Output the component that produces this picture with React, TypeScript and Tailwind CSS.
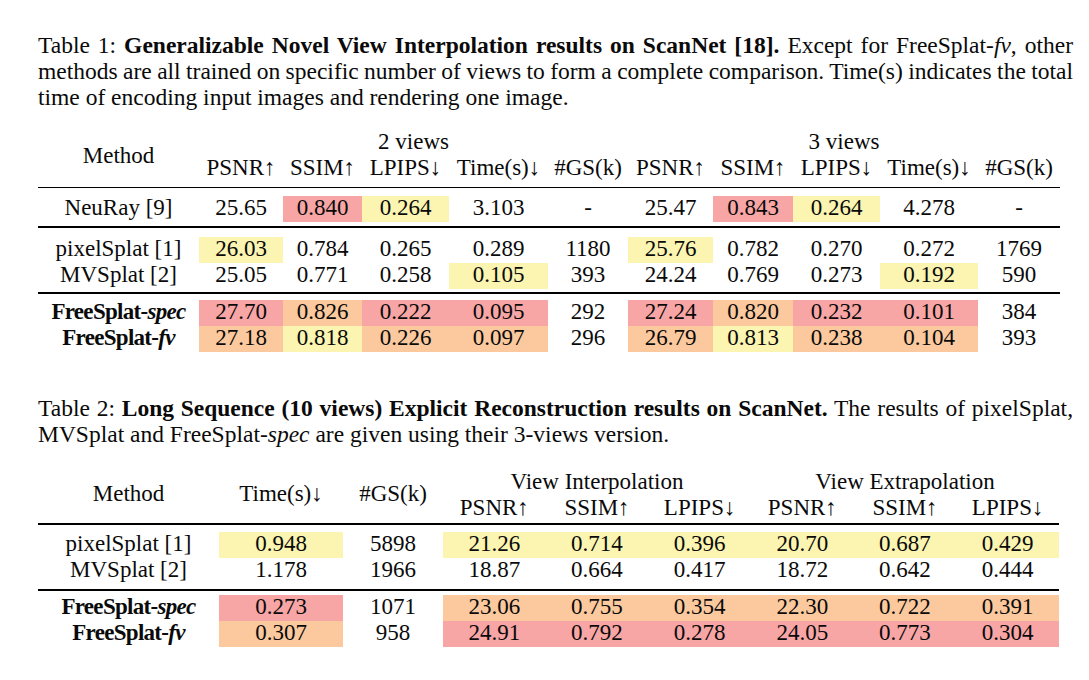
import React from "react";

const Y = "bg-[#FBF5B1]";
const R = "bg-[#F8A6A5]";
const O = "bg-[#FBC99D]";

type C = [string, string?];

const T1 = "grid grid-cols-[161px_84px_79px_87px_99px_80px_85px_80px_87px_98px_82px]";
const T2 = "grid grid-cols-[181px_124px_100px_102.67px_102.67px_102.67px_102.67px_102.67px_102.67px]";

function Cell({ v, bg }: { v: React.ReactNode; bg?: string }) {
  return <div className={`h-[26px] leading-[23px] text-center whitespace-nowrap ${bg ?? ""}`}>{v}</div>;
}

function Row({ grid, name, cells }: { grid: string; name: React.ReactNode; cells: C[] }) {
  return (
    <div className={grid}>
      <Cell v={name} />
      {cells.map((c, i) => (
        <Cell key={i} v={c[0]} bg={c[1]} />
      ))}
    </div>
  );
}

function Rule({ className }: { className: string }) {
  return <div className={`h-[1.5px] bg-black ${className}`} />;
}

const Spec = (
  <span className="font-bold tracking-[-0.7px]">
    FreeSplat-<i>spec</i>
  </span>
);
const Fv = (
  <span className="font-bold tracking-[-0.7px]">
    FreeSplat-<i>fv</i>
  </span>
);

function JLine({ children }: { children: React.ReactNode }) {
  return (
    <div className="text-justify [text-align-last:justify] [word-spacing:-1.2px] whitespace-nowrap">{children}</div>
  );
}

export default function App() {
  return (
    <div className="w-[1089px] h-[680px] bg-white text-[#0a0a0a] font-['Liberation_Serif','Times_New_Roman',serif] pl-[38px] pt-[32px] overflow-hidden">
      {/* Caption 1 */}
      <div className="w-[1035px] text-[23.5px] leading-[26px]">
        <JLine>
          Table 1: <b>Generalizable Novel View Interpolation results on ScanNet [18].</b> Except for FreeSplat-<i>fv</i>, other
        </JLine>
        <JLine>
          methods are all trained on specific number of views to form a complete comparison. Time(s) indicates the total
        </JLine>
        <div>time of encoding input images and rendering one image.</div>
      </div>

      {/* Table 1 */}
      <div className="w-[1022px] text-[23px] mt-[20px]">
        <div className="grid grid-cols-[161px_429px_432px]">
          <div className="row-span-2 flex items-center justify-center h-[52px] leading-[23px] pb-[2px]">Method</div>
          <div className="h-[26px] leading-[23px] text-center">2 views</div>
          <div className="h-[26px] leading-[23px] text-center">3 views</div>
          <div className="col-start-2 col-span-2 grid grid-cols-[84px_79px_87px_99px_80px_85px_80px_87px_98px_82px]">
            {["PSNR↑", "SSIM↑", "LPIPS↓", "Time(s)↓", "#GS(k)", "PSNR↑", "SSIM↑", "LPIPS↓", "Time(s)↓", "#GS(k)"].map((h, i) => (
              <div key={i} className="h-[26px] leading-[23px] text-center whitespace-nowrap">
                {h}
              </div>
            ))}
          </div>
        </div>
        <Rule className="mt-[4.5px]" />
        <div className="mt-[8px]">
          <Row
            grid={T1}
            name="NeuRay [9]"
            cells={[["25.65"], ["0.840", R], ["0.264", Y], ["3.103"], ["-"], ["25.47"], ["0.843", R], ["0.264", Y], ["4.278"], ["-"]]}
          />
        </div>
        <Rule className="mt-[4px]" />
        <div className="mt-[9.5px]">
          <Row
            grid={T1}
            name="pixelSplat [1]"
            cells={[["26.03", Y], ["0.784"], ["0.265"], ["0.289"], ["1180"], ["25.76", Y], ["0.782"], ["0.270"], ["0.272"], ["1769"]]}
          />
          <Row
            grid={T1}
            name="MVSplat [2]"
            cells={[["25.05"], ["0.771"], ["0.258"], ["0.105", Y], ["393"], ["24.24"], ["0.769"], ["0.273"], ["0.192", Y], ["590"]]}
          />
        </div>
        <Rule className="mt-[3px]" />
        <div className="mt-[6.5px]">
          <Row
            grid={T1}
            name={Spec}
            cells={[["27.70", R], ["0.826", O], ["0.222", R], ["0.095", R], ["292"], ["27.24", R], ["0.820", O], ["0.232", R], ["0.101", R], ["384"]]}
          />
          <Row
            grid={T1}
            name={Fv}
            cells={[["27.18", O], ["0.818", Y], ["0.226", O], ["0.097", O], ["296"], ["26.79", O], ["0.813", Y], ["0.238", O], ["0.104", O], ["393"]]}
          />
        </div>
      </div>

      {/* Caption 2 */}
      <div className="w-[1035px] text-[23.5px] leading-[26px] mt-[43px]">
        <JLine>
          Table 2: <b>Long Sequence (10 views) Explicit Reconstruction results on ScanNet.</b> The results of pixelSplat,
        </JLine>
        <div>
          MVSplat and FreeSplat-<i>spec</i> are given using their 3-views version.
        </div>
      </div>

      {/* Table 2 */}
      <div className="w-[1021px] text-[23px] mt-[22.5px]">
        <div className="grid grid-cols-[181px_124px_100px_308px_308px]">
          <div className="row-span-2 flex items-center justify-center h-[52px] leading-[23px] pb-[4px]">Method</div>
          <div className="row-span-2 flex items-center justify-center h-[52px] leading-[23px] pb-[4px]">Time(s)↓</div>
          <div className="row-span-2 flex items-center justify-center h-[52px] leading-[23px] pb-[4px]">#GS(k)</div>
          <div className="h-[26px] leading-[23px] text-center">View Interpolation</div>
          <div className="h-[26px] leading-[23px] text-center">View Extrapolation</div>
          <div className="col-start-4 col-span-2 grid grid-cols-6">
            {["PSNR↑", "SSIM↑", "LPIPS↓", "PSNR↑", "SSIM↑", "LPIPS↓"].map((h, i) => (
              <div key={i} className="h-[26px] leading-[23px] text-center whitespace-nowrap">
                {h}
              </div>
            ))}
          </div>
        </div>
        <Rule className="mt-[1.5px]" />
        <div className="mt-[7.5px]">
          <Row
            grid={T2}
            name="pixelSplat [1]"
            cells={[["0.948", Y], ["5898"], ["21.26", Y], ["0.714", Y], ["0.396", Y], ["20.70", Y], ["0.687", Y], ["0.429", Y]]}
          />
          <Row
            grid={T2}
            name="MVSplat [2]"
            cells={[["1.178"], ["1966"], ["18.87"], ["0.664"], ["0.417"], ["18.72"], ["0.642"], ["0.444"]]}
          />
        </div>
        <Rule className="mt-[5px]" />
        <div className="mt-[4.5px]">
          <Row
            grid={T2}
            name={Spec}
            cells={[["0.273", R], ["1071"], ["23.06", O], ["0.755", O], ["0.354", O], ["22.30", O], ["0.722", O], ["0.391", O]]}
          />
          <Row
            grid={T2}
            name={Fv}
            cells={[["0.307", O], ["958"], ["24.91", R], ["0.792", R], ["0.278", R], ["24.05", R], ["0.773", R], ["0.304", R]]}
          />
        </div>
      </div>
    </div>
  );
}
